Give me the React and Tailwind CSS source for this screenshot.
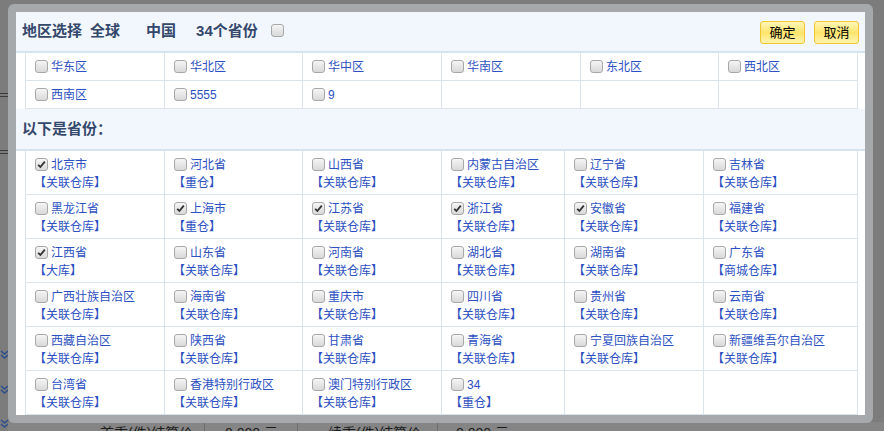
import React from 'react';

const FONT = { fontFamily: '"Liberation Sans", "Noto Sans CJK SC", sans-serif' };

const regions = [
  ['华东区', '华北区', '华中区', '华南区', '东北区', '西北区'],
  ['西南区', '5555', '9', null, null, null],
];

const provinces = [
  [['北京市', '关联仓库', true], ['河北省', '重仓'], ['山西省', '关联仓库'], ['内蒙古自治区', '关联仓库'], ['辽宁省', '关联仓库'], ['吉林省', '关联仓库']],
  [['黑龙江省', '关联仓库'], ['上海市', '重仓', true], ['江苏省', '关联仓库', true], ['浙江省', '关联仓库', true], ['安徽省', '关联仓库', true], ['福建省', '关联仓库']],
  [['江西省', '大库', true], ['山东省', '关联仓库'], ['河南省', '关联仓库'], ['湖北省', '关联仓库'], ['湖南省', '关联仓库'], ['广东省', '商城仓库']],
  [['广西壮族自治区', '关联仓库'], ['海南省', '关联仓库'], ['重庆市', '关联仓库'], ['四川省', '关联仓库'], ['贵州省', '关联仓库'], ['云南省', '关联仓库']],
  [['西藏自治区', '关联仓库'], ['陕西省', '关联仓库'], ['甘肃省', '关联仓库'], ['青海省', '关联仓库'], ['宁夏回族自治区', '关联仓库'], ['新疆维吾尔自治区', '关联仓库']],
  [['台湾省', '关联仓库'], ['香港特别行政区', '关联仓库'], ['澳门特别行政区', '关联仓库'], ['34', '重仓'], null, null],
];

const Check = ({ checked }) => (
  <span className="inline-flex w-[13px] h-[13px] shrink-0 items-center justify-center rounded-[3px] border border-[#a8a8a8] bg-gradient-to-b from-[#f5f5f5] to-[#d9d9d9]">
    {checked && (
      <svg width="9" height="9" viewBox="0 0 9 9">
        <path d="M1.2 4.8 L3.4 7 L7.8 1.6" fill="none" stroke="#333" strokeWidth="1.8" />
      </svg>
    )}
  </span>
);

const Chevrons = () => (
  <svg width="9" height="9" viewBox="0 0 9 9">
    <path d="M1 1 L4.5 4 L8 1 M1 5 L4.5 8 L8 5" fill="none" stroke="#2d4f8c" strokeWidth="1.6" />
  </svg>
);

const YellowBtn = ({ children }) => (
  <button className="w-[45px] h-[23px] rounded-[3px] border border-[#f2c531] bg-gradient-to-b from-[#fff6b8] via-[#ffe56a] to-[#fff3ad] text-[13px] font-normal text-black leading-none">
    {children}
  </button>
);

export default function App() {
  return (
    <div className="relative w-[884px] h-[431px] overflow-hidden bg-[#7c7c7c]" style={FONT}>
      {/* page beneath the overlay */}
      <div className="flex h-full">
        <div className="w-[8px] flex flex-col items-center">
          <div className="mt-[93px] w-[8px] h-[4px] border-y border-[#3a3a3a]" />
          <div className="mt-[53px] w-[8px] h-[4px] border-y border-[#3a3a3a]" />
          <div className="mt-[196px]"><Chevrons /></div>
          <div className="mt-[26px]"><Chevrons /></div>
          <div className="mt-[25px]"><Chevrons /></div>
        </div>
        <div className="flex-1 flex flex-col">
          <div className="flex-1" />
          <div className="h-[9px] flex text-[14px] leading-[18px] text-[#1c1c1c] bg-[#858585] overflow-hidden">
            <div className="w-[197px] pl-[92px] pt-[2px] border-r border-[#6c6c6c]">首重(件)结算价格：</div>
            <div className="w-[93px] pl-[20px] pt-[2px] border-r border-[#6c6c6c]">0.000 元</div>
            <div className="w-[140px] pl-[30px] pt-[2px] border-r border-[#6c6c6c]">续重(件)结算价格：</div>
            <div className="w-[120px] pl-[18px] pt-[2px]">0.000 元</div>
          </div>
        </div>
      </div>

      {/* dialog */}
      <div className="absolute left-[8px] top-[4px] w-[865px] h-[419px] rounded-[6px] bg-[#a6a9ac] p-[8px]">
        <div className="h-full bg-[#f2f7fd] flex flex-col overflow-hidden">
          <header className="h-[39px] shrink-0 flex items-center pl-[6px] pr-[6px] text-[15px] font-bold text-[#34486c]">
            <span>地区选择</span>
            <span className="ml-[8px]">全球</span>
            <span className="ml-[26px]">中国</span>
            <span className="ml-[20px]">34个省份</span>
            <span className="ml-[13px] mt-[2px]"><Check /></span>
            <div className="ml-auto flex gap-[9px] mt-[1px]">
              <YellowBtn>确定</YellowBtn>
              <YellowBtn>取消</YellowBtn>
            </div>
          </header>

          <div className="bg-white border-t-2 border-[#d7e4f0] px-[9px]">
            <div className="grid grid-cols-[139px_138px_139px_139px_138px_139px] border-l border-[#dbe4ec]">
              {regions.flat().map((r, i) => (
                <div key={i} className="h-[28px] border-r border-b border-[#dbe4ec] flex items-center gap-[3px] pl-[9px] text-[12px] text-[#2c50c2]">
                  {r && (
                    <>
                      <Check />
                      <span>{r}</span>
                    </>
                  )}
                </div>
              ))}
            </div>
          </div>

          <div className="h-[40px] shrink-0 flex items-center pl-[6px] text-[15px] font-bold text-[#34486c]">以下是省份：</div>

          <div className="flex-1 bg-white border-t-2 border-[#d7e4f0] px-[9px]">
            <div className="grid grid-cols-[139px_138px_139px_123px_139px_154px] border-l border-[#dbe4ec]">
              {provinces.flat().map((p, i) => (
                <div key={i} className="h-[44px] border-r border-b border-[#dbe4ec] pl-[9px] pt-[4px] text-[12px] text-[#2c50c2]">
                  {p && (
                    <>
                      <div className="flex items-center gap-[3px] h-[19px]">
                        <Check checked={p[2]} />
                        <span>{p[0]}</span>
                      </div>
                      <div className="h-[19px] leading-[19px] -ml-[1px]">【{p[1]}】</div>
                    </>
                  )}
                </div>
              ))}
            </div>
          </div>
        </div>
      </div>
    </div>
  );
}
